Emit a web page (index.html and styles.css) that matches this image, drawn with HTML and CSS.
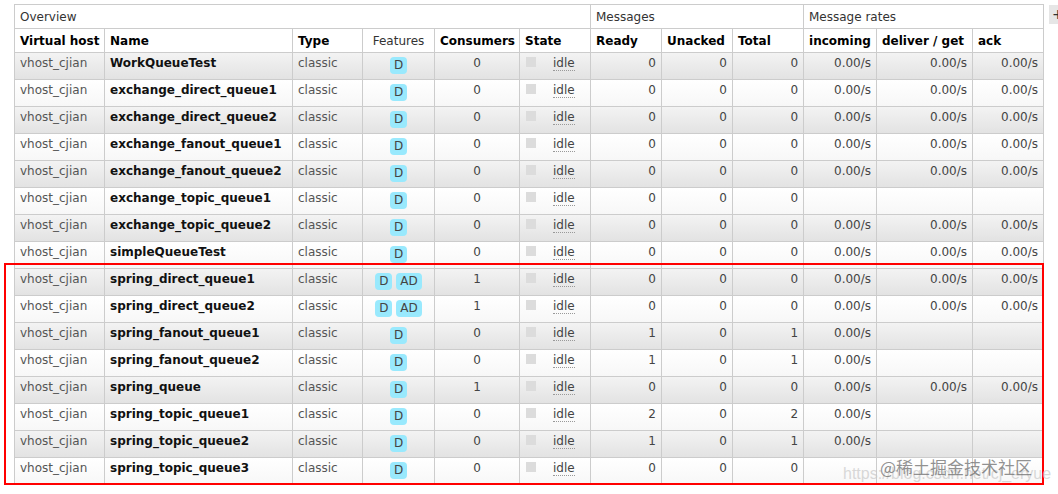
FILE: index.html
```html
<!DOCTYPE html>
<html lang="en">
<head>
<meta charset="utf-8">
<title>Queues</title>
<link rel="stylesheet" href="styles.css">
</head>
<body>
<div class="page">
  <table class="list">
    <colgroup>
      <col class="w90"><col class="w188"><col class="w70"><col class="w72"><col class="w85"><col class="w71">
      <col class="w71"><col class="w71"><col class="w71"><col class="w73"><col class="w96"><col class="w71">
    </colgroup>
    <thead>
      <tr class="group">
        <th colspan="6">Overview</th>
        <th colspan="3">Messages</th>
        <th colspan="3">Message rates</th>
      </tr>
      <tr class="heads">
        <th>Virtual host</th>
        <th>Name</th>
        <th>Type</th>
        <th class="plain center">Features</th>
        <th>Consumers</th>
        <th>State</th>
        <th>Ready</th>
        <th>Unacked</th>
        <th>Total</th>
        <th>incoming</th>
        <th>deliver / get</th>
        <th>ack</th>
      </tr>
    </thead>
    <tbody>
      <tr class="alt1">
        <td class="vh">vhost_cjian</td><td class="name">WorkQueueTest</td><td class="vh">classic</td>
        <td class="center"><span class="badge">D</span></td><td class="center">0</td>
        <td><span class="sq"></span><abbr class="idle">idle</abbr></td>
        <td class="r">0</td><td class="r">0</td><td class="r">0</td>
        <td class="r">0.00/s</td><td class="r">0.00/s</td><td class="r">0.00/s</td>
      </tr>
      <tr class="alt2">
        <td class="vh">vhost_cjian</td><td class="name">exchange_direct_queue1</td><td class="vh">classic</td>
        <td class="center"><span class="badge">D</span></td><td class="center">0</td>
        <td><span class="sq"></span><abbr class="idle">idle</abbr></td>
        <td class="r">0</td><td class="r">0</td><td class="r">0</td>
        <td class="r">0.00/s</td><td class="r">0.00/s</td><td class="r">0.00/s</td>
      </tr>
      <tr class="alt1">
        <td class="vh">vhost_cjian</td><td class="name">exchange_direct_queue2</td><td class="vh">classic</td>
        <td class="center"><span class="badge">D</span></td><td class="center">0</td>
        <td><span class="sq"></span><abbr class="idle">idle</abbr></td>
        <td class="r">0</td><td class="r">0</td><td class="r">0</td>
        <td class="r">0.00/s</td><td class="r">0.00/s</td><td class="r">0.00/s</td>
      </tr>
      <tr class="alt2">
        <td class="vh">vhost_cjian</td><td class="name">exchange_fanout_queue1</td><td class="vh">classic</td>
        <td class="center"><span class="badge">D</span></td><td class="center">0</td>
        <td><span class="sq"></span><abbr class="idle">idle</abbr></td>
        <td class="r">0</td><td class="r">0</td><td class="r">0</td>
        <td class="r">0.00/s</td><td class="r">0.00/s</td><td class="r">0.00/s</td>
      </tr>
      <tr class="alt1">
        <td class="vh">vhost_cjian</td><td class="name">exchange_fanout_queue2</td><td class="vh">classic</td>
        <td class="center"><span class="badge">D</span></td><td class="center">0</td>
        <td><span class="sq"></span><abbr class="idle">idle</abbr></td>
        <td class="r">0</td><td class="r">0</td><td class="r">0</td>
        <td class="r">0.00/s</td><td class="r">0.00/s</td><td class="r">0.00/s</td>
      </tr>
      <tr class="alt2">
        <td class="vh">vhost_cjian</td><td class="name">exchange_topic_queue1</td><td class="vh">classic</td>
        <td class="center"><span class="badge">D</span></td><td class="center">0</td>
        <td><span class="sq"></span><abbr class="idle">idle</abbr></td>
        <td class="r">0</td><td class="r">0</td><td class="r">0</td>
        <td class="r"></td><td class="r"></td><td class="r"></td>
      </tr>
      <tr class="alt1">
        <td class="vh">vhost_cjian</td><td class="name">exchange_topic_queue2</td><td class="vh">classic</td>
        <td class="center"><span class="badge">D</span></td><td class="center">0</td>
        <td><span class="sq"></span><abbr class="idle">idle</abbr></td>
        <td class="r">0</td><td class="r">0</td><td class="r">0</td>
        <td class="r">0.00/s</td><td class="r">0.00/s</td><td class="r">0.00/s</td>
      </tr>
      <tr class="alt2">
        <td class="vh">vhost_cjian</td><td class="name">simpleQueueTest</td><td class="vh">classic</td>
        <td class="center"><span class="badge">D</span></td><td class="center">0</td>
        <td><span class="sq"></span><abbr class="idle">idle</abbr></td>
        <td class="r">0</td><td class="r">0</td><td class="r">0</td>
        <td class="r">0.00/s</td><td class="r">0.00/s</td><td class="r">0.00/s</td>
      </tr>
      <tr class="alt1">
        <td class="vh">vhost_cjian</td><td class="name">spring_direct_queue1</td><td class="vh">classic</td>
        <td class="center"><span class="badge">D</span> <span class="badge">AD</span></td><td class="center">1</td>
        <td><span class="sq"></span><abbr class="idle">idle</abbr></td>
        <td class="r">0</td><td class="r">0</td><td class="r">0</td>
        <td class="r">0.00/s</td><td class="r">0.00/s</td><td class="r">0.00/s</td>
      </tr>
      <tr class="alt2">
        <td class="vh">vhost_cjian</td><td class="name">spring_direct_queue2</td><td class="vh">classic</td>
        <td class="center"><span class="badge">D</span> <span class="badge">AD</span></td><td class="center">1</td>
        <td><span class="sq"></span><abbr class="idle">idle</abbr></td>
        <td class="r">0</td><td class="r">0</td><td class="r">0</td>
        <td class="r">0.00/s</td><td class="r">0.00/s</td><td class="r">0.00/s</td>
      </tr>
      <tr class="alt1">
        <td class="vh">vhost_cjian</td><td class="name">spring_fanout_queue1</td><td class="vh">classic</td>
        <td class="center"><span class="badge">D</span></td><td class="center">0</td>
        <td><span class="sq"></span><abbr class="idle">idle</abbr></td>
        <td class="r">1</td><td class="r">0</td><td class="r">1</td>
        <td class="r">0.00/s</td><td class="r"></td><td class="r"></td>
      </tr>
      <tr class="alt2">
        <td class="vh">vhost_cjian</td><td class="name">spring_fanout_queue2</td><td class="vh">classic</td>
        <td class="center"><span class="badge">D</span></td><td class="center">0</td>
        <td><span class="sq"></span><abbr class="idle">idle</abbr></td>
        <td class="r">1</td><td class="r">0</td><td class="r">1</td>
        <td class="r">0.00/s</td><td class="r"></td><td class="r"></td>
      </tr>
      <tr class="alt1">
        <td class="vh">vhost_cjian</td><td class="name">spring_queue</td><td class="vh">classic</td>
        <td class="center"><span class="badge">D</span></td><td class="center">1</td>
        <td><span class="sq"></span><abbr class="idle">idle</abbr></td>
        <td class="r">0</td><td class="r">0</td><td class="r">0</td>
        <td class="r">0.00/s</td><td class="r">0.00/s</td><td class="r">0.00/s</td>
      </tr>
      <tr class="alt2">
        <td class="vh">vhost_cjian</td><td class="name">spring_topic_queue1</td><td class="vh">classic</td>
        <td class="center"><span class="badge">D</span></td><td class="center">0</td>
        <td><span class="sq"></span><abbr class="idle">idle</abbr></td>
        <td class="r">2</td><td class="r">0</td><td class="r">2</td>
        <td class="r">0.00/s</td><td class="r"></td><td class="r"></td>
      </tr>
      <tr class="alt1">
        <td class="vh">vhost_cjian</td><td class="name">spring_topic_queue2</td><td class="vh">classic</td>
        <td class="center"><span class="badge">D</span></td><td class="center">0</td>
        <td><span class="sq"></span><abbr class="idle">idle</abbr></td>
        <td class="r">1</td><td class="r">0</td><td class="r">1</td>
        <td class="r">0.00/s</td><td class="r"></td><td class="r"></td>
      </tr>
      <tr class="alt2">
        <td class="vh">vhost_cjian</td><td class="name">spring_topic_queue3</td><td class="vh">classic</td>
        <td class="center"><span class="badge">D</span></td><td class="center">0</td>
        <td><span class="sq"></span><abbr class="idle">idle</abbr></td>
        <td class="r">0</td><td class="r">0</td><td class="r">0</td>
        <td class="r"></td><td class="r"></td><td class="r"></td>
      </tr>
    </tbody>
  </table>
  <span class="plus">+</span>
  <div class="highlight"></div>
  <div class="watermark">
    <span class="wm-url">https://blog.csdn.net/cj_eryue</span>
    <span class="wm-cn">@稀土掘金技术社区</span>
  </div>
</div>
</body>
</html>
```

FILE: styles.css
```css
* { box-sizing: border-box; }

html, body {
  margin: 0;
  padding: 0;
  background: #fff;
}

body {
  font-family: "DejaVu Sans", Verdana, sans-serif;
  font-size: 12px;
  color: #444;
}

.page {
  position: relative;
  display: flex;
  align-items: flex-start;
  width: 1058px;
  height: 494px;
  overflow: hidden;
  padding: 4px 0 0 14px;
}

table.list {
  border-collapse: collapse;
  table-layout: fixed;
  width: 1030px;
  flex: none;
}

.w90 { width: 90px; }
.w188 { width: 188px; }
.w70 { width: 70px; }
.w72 { width: 72px; }
.w85 { width: 85px; }
.w71 { width: 71px; }
.w73 { width: 73px; }
.w96 { width: 96px; }

.list th,
.list td {
  border: 1px solid #ccc;
  padding: 3px 5px 0 5px;
  text-align: left;
  vertical-align: top;
  white-space: nowrap;
  overflow: hidden;
  line-height: 15px;
}

.list th { padding-top: 5px; }

.list thead tr { height: 24px; background: #fff; }
.list .group th { font-weight: normal; color: #333; }
.list .heads th { color: #000; font-weight: bold; }
.list .heads th.plain { font-weight: normal; color: #333; }
.list th.center, .list td.center { text-align: center; }

.list tbody tr { height: 27px; }
.alt1 { background: linear-gradient(#f3f3f3, #e2e2e2); }
.alt2 { background: linear-gradient(#ffffff, #f7f7f7); }

.list td.vh { color: #555; }
.list td.name { color: #111; font-weight: bold; }
.list td.r { text-align: right; }

.badge {
  display: inline-block;
  vertical-align: top;
  height: 17px;
  line-height: 17px;
  margin-top: 1px;
  padding: 0 4px;
  border-radius: 4px;
  background: #99e9fd;
  color: #444;
}

.sq {
  display: inline-block;
  vertical-align: top;
  width: 10px;
  height: 10px;
  margin-top: 1px;
  margin-left: 1px;
  margin-right: 17px;
  background: #dcdcdc;
}

.idle {
  text-decoration: none;
  border-bottom: 1px dotted #999;
  color: #444;
}

.plus {
  flex: none;
  margin-left: 5px;
  margin-top: 1px;
  width: 14px;
  height: 19px;
  line-height: 18px;
  padding-left: 3px;
  background: #e6e6e6;
  color: #333;
  font-size: 14px;
}

.highlight {
  position: absolute;
  left: 4px;
  top: 263px;
  width: 1040px;
  height: 222px;
  border: 2px solid #f00;
  pointer-events: none;
}

.watermark {
  position: absolute;
  left: 843px;
  top: 456px;
  width: 215px;
  height: 30px;
  pointer-events: none;
}

.wm-url {
  position: absolute;
  left: 0;
  top: 9px;
  font-family: "Liberation Sans", Arial, sans-serif;
  font-size: 16px;
  line-height: 18px;
  color: rgba(200, 200, 200, 0.7);
  white-space: nowrap;
}

.wm-cn {
  position: absolute;
  left: 37px;
  top: 0;
  font-family: "Noto Sans CJK SC", sans-serif;
  font-size: 17px;
  line-height: 22px;
  color: rgba(110, 110, 110, 0.75);
  white-space: nowrap;
}
```
